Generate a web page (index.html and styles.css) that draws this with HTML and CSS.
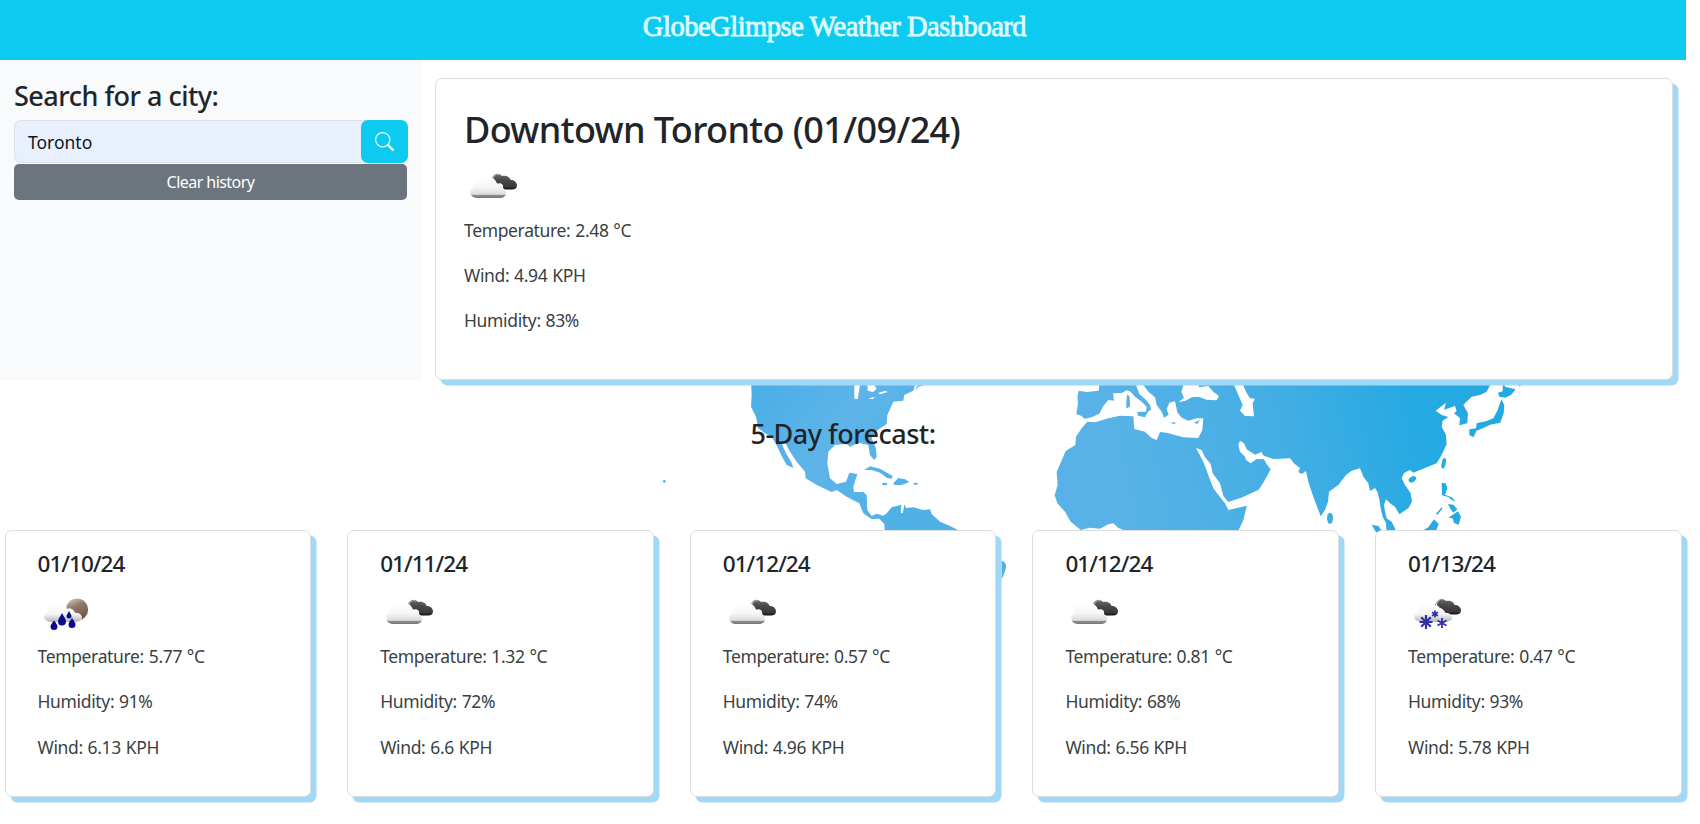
FILE: index.html
```
<!DOCTYPE html>
<html lang="en">
<head>
<meta charset="utf-8">
<title>GlobeGlimpse Weather Dashboard</title>
<link rel="stylesheet" href="styles.css">
</head>
<body>
<svg width="0" height="0" class="defs" aria-hidden="true">
  <defs>
    <linearGradient id="white" x1="0" y1="0" x2="0" y2="1"><stop offset="0" stop-color="#fff"/><stop offset=".5" stop-color="#f6f6f6"/><stop offset=".83" stop-color="#dcdcdc"/><stop offset=".88" stop-color="#8c8c8c"/><stop offset="1" stop-color="#777"/></linearGradient>
    <linearGradient id="pale" x1="0" y1="0" x2="0" y2="1"><stop offset="0" stop-color="#fff"/><stop offset=".6" stop-color="#f5f5f5"/><stop offset="1" stop-color="#b4b4b4"/></linearGradient>
    <linearGradient id="dark" x1="0" y1="0" x2="0" y2="1"><stop offset="0" stop-color="#6c6c6c"/><stop offset=".4" stop-color="#484848"/><stop offset=".8" stop-color="#3a3a3a"/><stop offset="1" stop-color="#111"/></linearGradient>
    <linearGradient id="moon" x1="0" y1="0" x2=".4" y2="1"><stop offset="0" stop-color="#e0d2c6"/><stop offset=".45" stop-color="#927b69"/><stop offset="1" stop-color="#6f5545"/></linearGradient>
    <path id="darkcloud" d="M29 20C29 15 35 12 38 16C42 15 46 17 46.500 20C50 20 53 22 53 25.500C53 28 51 29.500 48 29.500H40C37 29 36 24 32 23Z"/>
    <path id="arc" d="M27 22C28 16 32 13 36 15"/>
    <symbol id="clouds" viewBox="0 0 56 56">
      <use href="#darkcloud" fill="url(#dark)"/><use href="#arc" fill="none" stroke="#999" stroke-width="1.300"/>
      <path fill="url(#white)" d="M12 38C5 37 5 30 9 27C9 21 14 16 20 17C26 15 32 19 33 24C37 22 40 25 39 28C44 31 43 37 37 38Z"/>
    </symbol>
    <path id="puff" fill="url(#pale)" d="M12 36C4 34 5 28 10 26C9 20 14 16 19 17C23 15 29 19 29 23C33 21 36 24 37 27C41 26 45 30 44 33C42 36 37 36 33 36Z"/>
    <symbol id="rain" viewBox="0 0 56 56">
      <circle cx="39" cy="23.500" r="11" fill="url(#moon)"/><use href="#puff"/>
      <g fill="#0b0b8f"><path d="M16 34.500C14 37 12.500 39 12.500 40.500A3.500 3.500 0 0 0 19.500 40.500C19.500 39 18 37 16 34.500ZM24 27C22 31 20 33 20 35.500A4 4 0 0 0 28 35.500C28 33 26 31 24 27ZM31 25C30 27 28.500 29 28.500 30A2.500 2.500 0 0 0 33.500 30C33.500 29 32 27 31 25ZM34 32C32 35 30.500 37 30.500 38.500A3.500 3.500 0 0 0 37.500 38.500C37.500 37 36 35 34 32Z"/></g>
    </symbol>
    <symbol id="snow" viewBox="0 0 56 56">
      <use href="#darkcloud" fill="url(#dark)" transform="translate(0 -1)"/><use href="#arc" fill="none" stroke="#999" transform="translate(0 -1)"/><use href="#puff"/>
      <g stroke="#3030b0" fill="none"><path stroke-width="2.200" d="M18 29V43M11.500 36H24.500M13.200 31.200L22.800 40.800M22.800 31.200L13.200 40.800"/><path stroke-width="1.800" d="M27 24.500V31.500M24 26.300L30 29.700M30 26.300L24 29.700M34 32V42M29.500 34.500L38.500 39.500M38.500 34.500L29.500 39.500"/></g>
    </symbol>
  </defs>
</svg>
<div class="page">
  <header class="header"><h1 class="brand">GlobeGlimpse Weather Dashboard</h1></header>
  <div class="top">
    <aside class="sidebar">
      <h2 class="label">Search for a city:</h2>
      <form class="search">
        <div class="field">Toronto</div>
        <button class="go" type="button" aria-label="Search"><svg width="19" height="19" viewBox="0 0 16 16" fill="currentColor"><path d="M11.742 10.344a6.500 6.500 0 1 0-1.397 1.398h-.001c.03.040.062.078.098.115l3.850 3.850a1 1 0 0 0 1.415-1.414l-3.850-3.850a1.007 1.007 0 0 0-.115-.1zM12 6.500a5.500 5.500 0 1 1-11 0 5.500 5.500 0 0 1 11 0z"/></svg></button>
      </form>
      <button class="clear" type="button">Clear history</button>
    </aside>
    <section class="card today">
      <h2 class="city">Downtown Toronto (01/09/24)</h2>
      <svg class="icon"><use href="#clouds"/></svg>
      <p>Temperature: 2.48 °C</p><p>Wind: 4.94 KPH</p><p>Humidity: 83%</p>
    </section>
  </div>
  <section class="forecast">
    <svg class="map" viewBox="600 380 1000 220" aria-hidden="true">
      <defs>
        <linearGradient id="east" gradientUnits="userSpaceOnUse" x1="250" y1="350" x2="1150" y2="150"><stop offset="0" stop-color="#58b2e7"/><stop offset=".55" stop-color="#42aee4"/><stop offset="1" stop-color="#24a9e2"/></linearGradient>
        <linearGradient id="west" gradientUnits="userSpaceOnUse" x1="300" y1="0" x2="800" y2="400"><stop offset="0" stop-color="#46aee5"/><stop offset=".5" stop-color="#5eb4e9"/><stop offset="1" stop-color="#4eb0e5"/></linearGradient>
      </defs>
      <g transform="translate(650 370) scale(.33333)" fill="url(#west)">
        <path d="M303 30L305 75L303 110L318 140L325 175L345 190L365 200L378 222L395 258L410 285L430 294L424 276L408 250L394 218L408 222L420 245L440 275L465 305L467 325L500 345L545 366L560 360L590 380L628 400L640 430L665 447L688 446L703 462L705 495H940L924 480L900 468L870 455L845 432L840 418L820 420L790 412L768 414L764 402L758 430L752 428L754 404L725 412L710 430L700 437L680 431L665 438L652 420L650 375L640 366L612 366L610 350L622 312L598 308L588 335L560 342L540 325L532 280L535 245L555 225L590 222L600 230L625 218L655 225L660 255L672 270L680 262L678 235L665 205L680 182L710 162L712 135L730 95L760 92L763 75L790 62L800 30Z"/>
        <path d="M795 62L805 50L835 42L850 30H820L800 50ZM643 300L660 289L690 296L728 318L725 326L712 324L690 308L665 300ZM730 340L745 324L765 328L778 336L765 341L750 346L732 344Z"/>
        <ellipse cx="704" cy="342" rx="8" ry="4"/><ellipse cx="797" cy="341" rx="7" ry="3"/><circle cx="43" cy="334" r="4"/>
        <path d="M1055 572Q1075 580 1066 600Q1062 615 1055 628Z"/>
        <path fill="#fff" d="M613 40H631L623 87L613 86ZM652 40H670L680 57L669 66L653 62ZM684 69L706 62L713 66L690 73ZM655 86L674 80L669 87Z"/>
      </g>
      <g transform="translate(1040 370) scale(.33333)" fill="url(#east)">
        <path d="M180 30L176 62L140 66L116 62L112 80L114 100L109 132L125 138L135 148L142 155L125 175L108 200L106 225L77 243L62 278L50 305L53 345L44 375L52 400L75 425L92 455L122 480L150 473L180 476L205 463L220 460L235 474L260 484V500H585L597 478L610 450L621 405L570 418L566 398L602 384L655 360L670 338L692 298L680 283L665 255L700 267L750 265L764 282L780 294L775 306L785 312L798 303L805 335L820 380L842 439L855 420L864 395L867 365L895 345L918 315L935 302L960 295L970 320L985 340L990 363L1005 354L1012 365L1018 388L1022 415L1028 440L1038 460L1040 490H1066L1065 475L1055 455L1040 445L1035 425L1032 405L1038 388L1050 400L1065 410L1078 433L1105 415L1116 395L1112 370L1095 345L1085 325L1092 309L1110 300L1120 308L1160 292L1190 280L1205 255L1220 222L1218 195L1205 170L1208 152L1225 141L1205 135L1187 122L1218 98L1212 119L1245 108L1250 123L1242 130L1260 145L1258 166L1282 160L1284 130L1270 105L1295 80L1320 75L1340 65L1358 30Z"/>
        <path fill="#fff" d="M128 148L155 142L178 131L190 108L205 90L222 92L219 70L245 69L260 61L272 65L285 80L305 95L320 110L318 125L292 125L294 137L315 142L324 125L333 119L330 105L318 90L298 72L288 45H310L325 65L345 82L350 105L365 125L372 143L386 134L380 118L388 98L405 94L412 127L425 143L445 152L470 145L490 145L487 180L475 204L430 202L380 188L360 186L350 210L335 204L315 185L283 177L280 139L240 137L205 145L165 157L140 155ZM415 96L432 84L424 65L432 40H475L477 52L505 48L520 65L537 78L530 91L500 89L475 80L455 82L435 93ZM580 40H607L618 65L630 85L645 86L638 100L642 139L615 138L600 122L608 105L595 75ZM600 212L612 220L620 238L645 254L665 246L675 268L650 267L632 280L618 270L615 260L600 245L595 225ZM468 234L485 240L495 262L512 282L518 310L540 340L550 378L565 396L602 384L630 405L565 420L555 400L545 388L520 355L505 315L490 275Z"/>
        <path d="M262 72L269 80L270 110L259 115L259 94ZM294 127L318 126L313 140ZM390 156L408 158L402 163ZM462 158L480 150L472 162Z"/>
        <path d="M1384 88L1393 105L1391 130L1381 158L1350 164L1335 172L1310 182L1300 202L1288 195V178L1308 175L1310 160L1340 153L1360 145L1373 120ZM1389 35L1395 50L1427 58L1413 75L1395 83L1378 80L1374 68L1388 64ZM1435 40H1448L1438 50Z"/>
        <ellipse cx="1211" cy="280" rx="6" ry="16" transform="rotate(12 1211 280)"/><ellipse cx="1117" cy="328" rx="12" ry="8" transform="rotate(-30 1117 328)"/><ellipse cx="870" cy="445" rx="9" ry="17"/>
        <path d="M1205 338L1217 340L1222 355L1215 374L1235 382L1247 395L1235 390L1225 381L1206 376ZM1188 431L1205 412L1207 416L1192 434ZM1224 402L1240 404L1252 418L1240 428L1230 415ZM1225 443L1254 424L1263 440L1256 464L1242 459L1238 445ZM1147 482L1165 472L1182 448L1196 462L1186 488H1147ZM995 464L1015 468L1028 485L1008 487ZM893 497L902 500L912 510L893 508Z"/>
      </g>
    </svg>
    <h2 class="heading">5-Day forecast:</h2>
    <div class="days">
      <article class="card day"><h3 class="date">01/10/24</h3><svg class="icon"><use href="#rain"/></svg><p>Temperature: 5.77 °C</p><p>Humidity: 91%</p><p>Wind: 6.13 KPH</p></article>
      <article class="card day"><h3 class="date">01/11/24</h3><svg class="icon"><use href="#clouds"/></svg><p>Temperature: 1.32 °C</p><p>Humidity: 72%</p><p>Wind: 6.6 KPH</p></article>
      <article class="card day"><h3 class="date">01/12/24</h3><svg class="icon"><use href="#clouds"/></svg><p>Temperature: 0.57 °C</p><p>Humidity: 74%</p><p>Wind: 4.96 KPH</p></article>
      <article class="card day"><h3 class="date">01/12/24</h3><svg class="icon"><use href="#clouds"/></svg><p>Temperature: 0.81 °C</p><p>Humidity: 68%</p><p>Wind: 6.56 KPH</p></article>
      <article class="card day"><h3 class="date">01/13/24</h3><svg class="icon"><use href="#snow"/></svg><p>Temperature: 0.47 °C</p><p>Humidity: 93%</p><p>Wind: 5.78 KPH</p></article>
    </div>
  </section>
</div>
</body>
</html>
```
FILE: styles.css
```
* { box-sizing: border-box; }
body { margin: 0; background: #fff; color: #212529; font: 400 17.5px/27px "Noto Sans", "Open Sans", sans-serif; overflow: hidden; }
h1, h2, h3, p { margin: 0; font-weight: 500; }
.defs { position: absolute; }
.page { width: 1686px; height: 824px; }
.header { height: 60px; background: #0dcaf0; padding: 10px 17px 0 0; text-align: center; }
.brand { font: 400 28.5px/34px "Liberation Serif", serif; letter-spacing: -.48px; color: #dcfaff; -webkit-text-stroke: .9px #dcfaff; white-space: nowrap; }
.top { display: flex; height: 320px; }
.sidebar { width: 421.5px; background: #f8fafc; padding: 19px 14px 0; }
.label { font-size: 27px; line-height: 33px; letter-spacing: -.5px; margin-bottom: 8px; white-space: nowrap; }
.search { display: flex; height: 42.5px; }
.field { flex: 1; background: #e8f0fe; border: 1px solid #dee2e6; border-right: 0; border-radius: 7px 0 0 7px; padding: 8px 13px; line-height: 27px; color: #11151a; margin-right: -5px; }
.go { width: 47px; border: 0; border-radius: 7px; background: #0dcaf0; color: #e8fdff; display: grid; place-items: center; padding: 0; position: relative; }
.clear { display: block; width: 393px; height: 36.5px; margin-top: 1px; border: 0; border-radius: 5px; background: #6c757d; color: #fff; font: inherit; font-size: 16px; letter-spacing: -.55px; padding: 2px 0 0; }
.card { background: #fff; border: 1px solid #dcdddf; border-radius: 7px; box-shadow: 5.5px 5.5px 0 #a2d8f5; position: relative; }
.card p { font-weight: 400; margin-bottom: 18px; color: #3a3f43; letter-spacing: -.35px; word-spacing: .6px; white-space: nowrap; }
.icon { display: block; width: 56px; height: 56px; margin-bottom: 1px; }
.today { margin: 18px 0 0 13.5px; width: 1238px; height: 302px; padding: 29px 28px; z-index: 1; }
.city { font-size: 36px; line-height: 43px; margin-bottom: 9px; letter-spacing: -.62px; white-space: nowrap; }
.forecast { position: relative; height: 444px; padding: 37px 4.5px 0; }
.map { position: absolute; left: 600px; top: 0; width: 1000px; height: 220px; }
.heading { position: relative; text-align: center; font-size: 27px; line-height: 33px; letter-spacing: -.5px; height: 113px; }
.days { display: flex; justify-content: space-between; }
.day { width: 306.500px; height: 267px; padding: 19px 32px; }
.day p:nth-of-type(3) { padding-top: .5px; }
.date { font-size: 22.5px; line-height: 27px; margin-bottom: 9px; letter-spacing: -.95px; }
```
